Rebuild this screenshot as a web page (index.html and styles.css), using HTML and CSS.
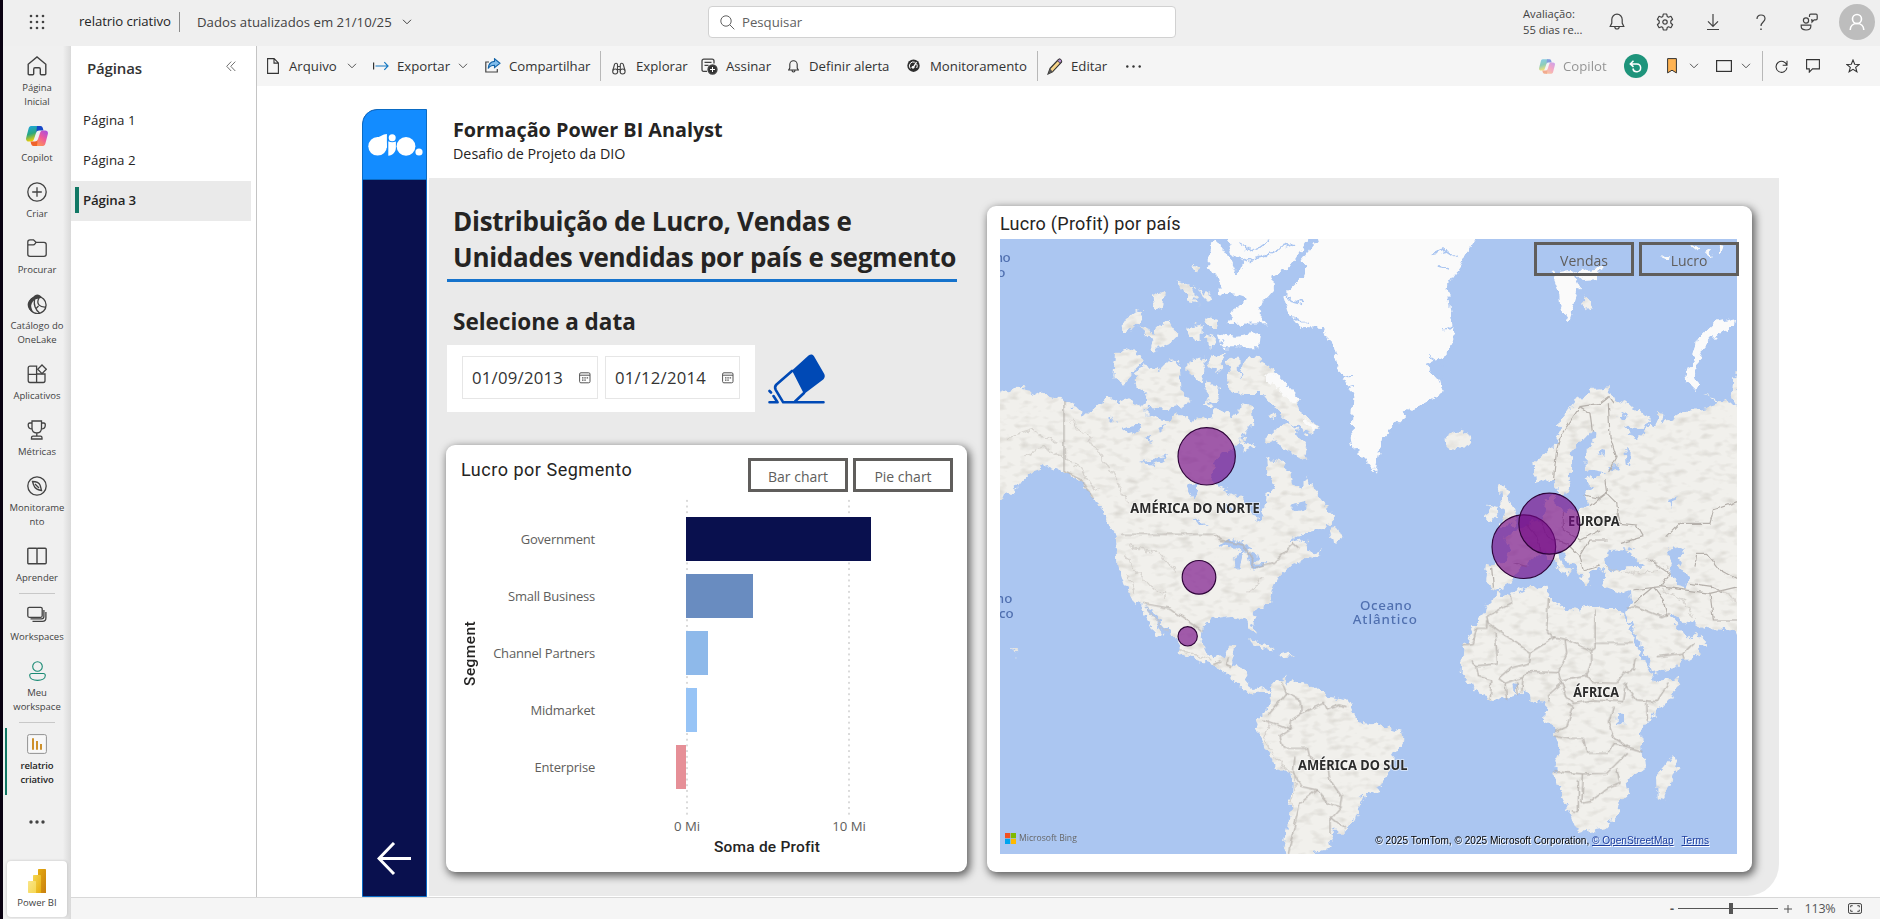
FILE: index.html
```html
<!DOCTYPE html>
<html lang="pt-BR">
<head>
<meta charset="utf-8">
<title>relatrio criativo - Power BI</title>
<link rel="stylesheet" href="styles.css">
</head>
<body>
<svg class="defs" width="0" height="0" aria-hidden="true">
  <defs>
    <linearGradient id="cpA" x1="0" y1="0" x2="0.3" y2="1"><stop offset="0" stop-color="#1aa5e8"/><stop offset=".55" stop-color="#2aa77f"/><stop offset="1" stop-color="#f5d000"/></linearGradient>
    <linearGradient id="cpB" x1="1" y1="0" x2="0.3" y2="1"><stop offset="0" stop-color="#a04de8"/><stop offset=".5" stop-color="#ef5a9a"/><stop offset="1" stop-color="#ff9a4d"/></linearGradient>
    <linearGradient id="pbA" x1="0" y1="0" x2="1" y2="1"><stop offset="0" stop-color="#e6ad10"/><stop offset="1" stop-color="#c87e0e"/></linearGradient>
    <linearGradient id="pbB" x1="0" y1="0" x2="1" y2="1"><stop offset="0" stop-color="#f6d751"/><stop offset="1" stop-color="#e6ad10"/></linearGradient>
    <linearGradient id="pbC" x1="0" y1="0" x2="1" y2="1"><stop offset="0" stop-color="#f9e589"/><stop offset="1" stop-color="#f6d751"/></linearGradient>
    <symbol id="copilot" viewBox="0 0 22 20">
      <path fill="url(#cpA)" d="M5 0h9.500c-1.500 0-2.500 1-3 2.600L8 13c-.5 1.700-1.500 2.500-3 2.500H2.700C.7 15.500-.4 14 .2 11.800L2.600 2.400C3 1 3.800 0 5 0z"/>
      <path fill="#1648c8" d="M11 0h3.500c1.300 0 1.900.8 2.300 2l.7 2.500h-4.300c-1.600 0-2.500.7-3 2.200z"/>
      <path fill="url(#cpB)" d="M17 20H7.500c1.500 0 2.500-1 3-2.600L14 7c.5-1.700 1.500-2.500 3-2.500h2.300c2 0 3.100 1.500 2.500 3.700l-2.400 9.400C19 19 18.200 20 17 20z"/>
      <path fill="#f0632a" d="M11 20H7.500c-1.300 0-1.900-.8-2.300-2l-.7-2.500h4.300c1.600 0 2.500-.7 3-2.200z"/>
    </symbol>
    <symbol id="chev" viewBox="0 0 10 6"><path d="M1 .8 5 4.800 9 .8" fill="none" stroke="currentColor"/></symbol>
    <symbol id="cal" viewBox="0 0 12 12"><g fill="none" stroke="#555"><rect x=".6" y=".8" width="10.400" height="10" rx="1.300"/><path d="M.6 3.200h10.400"/><path d="M3 5.800h6.200M3 8.200h4.200" stroke-width="1.300" stroke-dasharray="1.500 .8"/></g></symbol>
  </defs>
</svg>

<div class="app">
  <header class="topbar">
    <svg class="waffle" width="16" height="16" viewBox="0 0 16 16" fill="#424242"><circle cx="2" cy="2" r="1.300"/><circle cx="8" cy="2" r="1.300"/><circle cx="14" cy="2" r="1.300"/><circle cx="2" cy="8" r="1.300"/><circle cx="8" cy="8" r="1.300"/><circle cx="14" cy="8" r="1.300"/><circle cx="2" cy="14" r="1.300"/><circle cx="8" cy="14" r="1.300"/><circle cx="14" cy="14" r="1.300"/></svg>
    <div class="report-name">relatrio criativo</div>
    <div class="updated"><span>Dados atualizados em 21/10/25</span><svg width="10" height="6"><use href="#chev"/></svg></div>
    <div class="search">
      <svg width="15" height="15" viewBox="0 0 15 15" fill="none" stroke="#616161"><circle cx="6" cy="6" r="5.200"/><path d="m9.700 9.700 4.600 4.600"/></svg>
      <span>Pesquisar</span>
    </div>
    <div class="trial">Avaliação:<br>55 dias re...</div>
    <nav class="top-icons">
      <svg width="16" height="18" viewBox="0 0 16 18" fill="none" stroke="#424242" stroke-width="1.200"><path d="M1.200 13.500h13.600L13.200 10V6.400a5.200 5.200 0 0 0-10.400 0V10zM5.800 13.800a2.200 2.200 0 0 0 4.400 0"/></svg>
      <svg width="18" height="18" viewBox="0 0 18 18" fill="none" stroke="#424242" stroke-width="1.200" stroke-linejoin="round"><path d="M7.300 1h3.400l.5 2.400 1.300.8 2.400-.9 1.700 3-1.800 1.700v2l1.800 1.700-1.700 3-2.400-.9-1.300.8-.5 2.400H7.300l-.5-2.400-1.300-.8-2.400.9-1.700-3L3.200 10V8L1.400 6.300l1.700-3 2.400.9 1.300-.8z"/><circle cx="9" cy="9" r="2.200"/></svg>
      <svg width="14" height="18" viewBox="0 0 14 18" fill="none" stroke="#424242" stroke-width="1.200"><path d="M7 1v12M2 8.300l5 5 5-5M1 16.500h12"/></svg>
      <svg width="10" height="17" viewBox="0 0 10 17" fill="none" stroke="#424242" stroke-width="1.200"><path d="M1 5c0-2.500 1.700-4 4-4s4 1.400 4 3.800c0 3.200-4 3.400-4 7.200"/><path d="M5 14.500v1.600" stroke-width="1.500"/></svg>
      <svg width="18" height="18" viewBox="0 0 18 18" fill="none" stroke="#424242" stroke-width="1.200"><circle cx="6" cy="7.500" r="2.600"/><path d="M1.200 12.200h9.600v1.300c0 2.200-2 3.500-4.800 3.500s-4.800-1.300-4.800-3.500zM9.500 4V2.500c0-.8.500-1.300 1.300-1.300H16c.8 0 1.200.5 1.200 1.300v3c0 .8-.5 1.300-1.200 1.300h-1.800L12 9V6.800h-1"/></svg>
    </nav>
    <div class="avatar"><svg width="16" height="18" viewBox="0 0 16 18" fill="none" stroke="#fff" stroke-width="1.600"><circle cx="8" cy="6" r="4.500"/><path d="M1.200 17c0-4 2.800-6.500 6.800-6.500s6.800 2.500 6.800 6.500"/></svg></div>
  </header>

  <nav class="rail">
    <a class="nav"><svg viewBox="0 0 20 20" fill="none" stroke="#424242" stroke-width="1.400"><path d="M1.200 8.300 10 1l8.800 7.300v9.500c0 .7-.4 1-1 1h-3.500c-.6 0-1-.3-1-1v-4.600c0-1-.5-1.500-1.300-1.500H8c-.8 0-1.300.5-1.300 1.500v4.600c0 .7-.4 1-1 1H2.200c-.6 0-1-.3-1-1z"/></svg><span>Página<br>Inicial</span></a>
    <a class="nav"><svg class="wide"><use href="#copilot"/></svg><span>Copilot</span></a>
    <a class="nav"><svg viewBox="0 0 20 20" fill="none" stroke="#424242" stroke-width="1.300"><circle cx="10" cy="10" r="9.200"/><path d="M10 5.200v9.600M5.200 10h9.600"/></svg><span>Criar</span></a>
    <a class="nav"><svg viewBox="0 0 20 20" fill="none" stroke="#424242" stroke-width="1.300"><path d="M.8 4c0-1.400.9-2.200 2.200-2.200h3.500L9 4.300h8c1.400 0 2.200.9 2.200 2.200v9.700c0 1.300-.8 2.100-2.200 2.100H3c-1.300 0-2.200-.8-2.200-2.100zM.8 6.900h5.400c1.400 0 2-1.600 3-2.600"/></svg><span>Procurar</span></a>
    <a class="nav"><svg viewBox="0 0 20 20" fill="none" stroke="#424242" stroke-width="1.300"><circle cx="10.500" cy="11" r="8.600"/><path fill="#424242" stroke="none" d="M3 5.500C-.8 9 0 15.500 5.500 18c1-.5-1.700-4-1.300-6.500.4-3.200 2.300-5 4.600-6.300l6.200-1.400C12.500-.7 8 0 6.300 3 5 3.300 4 4.500 3 5.500z"/><path d="M7.500 5.500c-1 6 1.500 10.500 5 13.500M12 4c-3.500 6.500 1.500 9.500 7 9M8.500 15l3-3"/></svg><span>Catálogo do<br>OneLake</span></a>
    <a class="nav"><svg viewBox="0 0 20 20" fill="none" stroke="#424242" stroke-width="1.300"><path d="M9.600 10H18v6.500c0 1.300-.6 2-1.800 2H3c-1.200 0-1.800-.7-1.800-2V4c0-1.200.7-1.800 1.800-1.800h6.600v16.300M1.200 10.400h8.400"/><path d="m15 1 4.300 4.300L15 9.600l-4.300-4.300z"/></svg><span>Aplicativos</span></a>
    <a class="nav"><svg viewBox="0 0 20 20" fill="none" stroke="#424242" stroke-width="1.300"><path d="M5 1h9.500v7c0 3.200-2 5-4.700 5S5 11.200 5 8zM5 3H2.800C1.500 3 1.200 4 1.200 5c0 2.500 1.300 4 4 4M14.500 3h2.200c1.300 0 1.600 1 1.600 2 0 2.500-1.300 4-4 4M9.800 13v3M4.500 19v-1.200c0-1 .6-1.600 1.500-1.600h7.500c1 0 1.500.6 1.500 1.600V19z"/></svg><span>Métricas</span></a>
    <a class="nav"><svg viewBox="0 0 20 20" fill="none" stroke="#424242" stroke-width="1.300"><circle cx="10" cy="10" r="9.200"/><path d="M5.500 5.500c4 0 6.500 1 7.500 3.500s1 4 1.500 5.500c-3-.5-5-1-6.500-3s-2-4-2.500-6zM8 8l4 4"/></svg><span>Monitorame<br>nto</span></a>
    <a class="nav"><svg viewBox="0 0 20 20" fill="none" stroke="#424242" stroke-width="1.400"><path d="M.8 3.200c0-.7.3-1 1-1h7.500c.5 0 .7.500.7 1 0-.5.300-1 .8-1h7.400c.7 0 1 .3 1 1v13.600c0 .6-.3 1-1 1H1.800c-.7 0-1-.4-1-1zM10 2.500v15.200"/></svg><span>Aprender</span></a>
    <hr class="sep">
    <a class="nav"><svg viewBox="0 0 20 20" fill="none" stroke="#424242" stroke-width="1.300"><rect x=".8" y="2.300" width="14.400" height="10" rx="1.500"/><path d="M16.900 5v6.500c0 1.600-.9 2.400-2.400 2.400H3.500M18.900 7v6c0 2.300-1.400 3.400-3.500 3.400H5.500"/></svg><span>Workspaces</span></a>
    <a class="nav"><svg viewBox="0 0 20 20" fill="none" stroke="#1a8a74" stroke-width="1.100"><circle cx="10.500" cy="5.500" r="4.800"/><path d="M2.700 14.500c0-1.200.8-2 2-2h11.600c1.200 0 2 .8 2 2 0 3-3.300 4.900-7.800 4.900s-7.800-1.900-7.800-4.900z"/></svg><span>Meu<br>workspace</span></a>
    <hr class="sep">
    <a class="nav current"><svg viewBox="0 0 20 20"><rect x=".6" y=".6" width="18.800" height="18.800" rx="1.800" fill="#f8f8f8" stroke="#929292"/><path d="M6 4.200v11.600M10 7v8.800M14 10v5.800" stroke="#c98516" stroke-width="1.800"/></svg><span>relatrio<br>criativo</span></a>
    <svg class="more" width="16" height="4" viewBox="0 0 16 4" fill="#424242"><circle cx="2" cy="2" r="1.700"/><circle cx="8" cy="2" r="1.700"/><circle cx="14" cy="2" r="1.700"/></svg>
    <a class="product"><svg width="18" height="24" viewBox="0 0 18 24"><path fill="url(#pbA)" d="M10 1c0-.6.400-1 1-1h6c.6 0 1 .4 1 1v23h-8z"/><path fill="url(#pbB)" d="M5 7c0-.6.400-1 1-1h6c.6 0 1 .4 1 1v17H5z"/><path fill="url(#pbC)" d="M0 13c0-.6.400-1 1-1h6c.6 0 1 .4 1 1v11H1c-.6 0-1-.4-1-1z"/></svg><span>Power BI</span></a>
  </nav>

  <aside class="pages">
    <div class="pages-head"><h2>Páginas</h2><svg width="10" height="11" viewBox="0 0 10 11" fill="none" stroke="#707070"><path d="M5.200.6.700 5.300l4.500 4.700M9.300.6 4.800 5.300 9.300 10"/></svg></div>
    <div class="page-item">Página 1</div>
    <div class="page-item">Página 2</div>
    <div class="page-item on">Página 3</div>
  </aside>

  <div class="toolbar">
    <div class="tool"><svg width="12" height="16" viewBox="0 0 12 16" fill="none" stroke="#333" stroke-width="1.100"><path d="M.6.6h6.500l4.300 4.300v10.500H.6zM7 .6v4.500h4.400"/></svg><span>Arquivo</span><svg class="chev" width="10" height="6"><use href="#chev"/></svg></div>
    <div class="tool t8"><svg width="16" height="10" viewBox="0 0 16 10" fill="none"><path d="M.6 1.500v7" stroke="#333" stroke-width="1.200"/><path d="M2.500 5H15M11.300 1.200 15 5l-3.700 3.800" stroke="#1678c2" stroke-width="1.200"/></svg><span>Exportar</span><svg class="chev" width="10" height="6"><use href="#chev"/></svg></div>
    <div class="tool t8"><svg class="up" width="16" height="15" viewBox="0 0 16 15" fill="none"><path d="M4 4H.8v10h11.500v-3" stroke="#444" stroke-width="1.200"/><path d="M9.500.8 15 5.300 9.500 9.700V7.200c-3 0-5 .8-6.300 3.300.2-4.200 2-6.700 6.300-7.100z" fill="#83beec" stroke="#1464a8" stroke-width="1.100"/></svg><span>Compartilhar</span></div>
    <i class="bar"></i>
    <div class="tool t10"><svg class="dn" width="14" height="13" viewBox="0 0 14 13" fill="none" stroke="#444" stroke-width="1.100"><circle cx="3.200" cy="9.500" r="2.500"/><circle cx="10.600" cy="9.500" r="2.500"/><path d="M.8 8.500 2.500 2.500C2.800 1 5.300.6 5.500 2.500v7M13 8.500l-1.700-6C11 1 8.500.6 8.300 2.500v7M5.600 4.500h2.600M5.600 7.500h2.600"/></svg><span>Explorar</span></div>
    <div class="tool t8"><svg width="17" height="17" viewBox="0 0 17 17" fill="none" stroke="#424242" stroke-width="1.300"><path d="M6 13.300H2.500C1.500 13.300 1 12.500 1 11.500V3c0-1.200.7-1.900 1.900-1.900h8.200c1.200 0 1.900.7 1.900 1.900v2.500M3.500 4.400h7M3.500 7.300h4"/><circle cx="11.500" cy="11.500" r="4.500" fill="#333"/><path d="M11.500 9v5M9 11.500h5" stroke="#fff" stroke-width="1"/></svg><span>Assinar</span></div>
    <div class="tool t10"><svg width="11" height="13" viewBox="0 0 11 13" fill="none" stroke="#333" stroke-width="1.100"><path d="M.6 10h9.800L9.200 8V4.500a3.700 3.700 0 0 0-7.400 0V8zM4 10.300c0 2.300 3 2.300 3 0"/></svg><span>Definir alerta</span></div>
    <div class="tool t10"><svg width="13" height="14" viewBox="0 0 13 14" fill="none"><circle cx="6.500" cy="6.700" r="6.200" fill="#2e2e2e"/><path d="M3.300 9.500a4 4 0 0 1 4.500-6.300M9.700 5a4 4 0 0 1 0 4" stroke="#fff"/><path d="m9.500 3.200-3 5" stroke="#fff" stroke-width="1.300"/><circle cx="6" cy="8.300" r="1.400" fill="#fff"/></svg><span>Monitoramento</span></div>
    <i class="bar"></i>
    <div class="tool t8"><svg width="16" height="17" viewBox="0 0 16 17"><path d="m3 10.500 8.500-9c1.200-1 3.700 1 3 2.600l-9 9.800L1 16z" fill="#f7d48a" stroke="#333" stroke-width="1.100"/><path d="m10.500 2.700 1.600-1.500c1.300-.6 3 .9 2.300 2.500L13 5.300z" fill="#b58ad0" stroke="#333" stroke-width=".8"/><path d="m3 10.500-2 5.700 4.700-2.400z" fill="#555"/></svg><span>Editar</span></div>
    <div class="tool"><svg width="15" height="3" viewBox="0 0 15 3" fill="#333"><circle cx="1.300" cy="1.500" r="1.200"/><circle cx="7.500" cy="1.500" r="1.200"/><circle cx="13.700" cy="1.500" r="1.200"/></svg></div>
    <div class="tool t8 disabled"><svg width="16" height="15"><use href="#copilot"/></svg><span>Copilot</span></div>
    <div class="tool"><b class="reset"><svg width="14" height="13" viewBox="0 0 14 13" fill="none" stroke="#fff" stroke-width="1.500"><path d="M4.500.8 1.300 3.900l3.200 3M1.800 3.900h6a3.900 3.900 0 1 1-3.900 4.600"/></svg></b></div>
    <div class="tool"><svg width="10" height="16" viewBox="0 0 10 16"><path d="M.6.6h8.800v14.300L5 12.200.6 14.900z" fill="#ffb352" stroke="#333"/></svg><svg class="chev mark" width="10" height="6"><use href="#chev"/></svg></div>
    <div class="tool"><svg width="16" height="12" viewBox="0 0 16 12"><rect x=".6" y=".6" width="14.800" height="10.800" fill="none" stroke="#333" stroke-width="1.200"/></svg><svg class="chev near" width="10" height="6"><use href="#chev"/></svg></div>
    <i class="bar"></i>
    <div class="tool"><svg width="13" height="13" viewBox="0 0 13 13" fill="none" stroke="#333" stroke-width="1.100"><path d="M11.800 5.200A5.500 5.500 0 1 0 12 7.500M12 .8v4.500H7.700"/></svg></div>
    <div class="tool"><svg width="14" height="14" viewBox="0 0 14 14" fill="none" stroke="#333" stroke-width="1.100"><path d="M.6.6h12.800v9.300H6.500l-3.200 3.200V9.900H.6z"/></svg></div>
    <div class="tool"><svg width="14" height="14" viewBox="0 0 14 14" fill="none" stroke="#333" stroke-width="1.100"><path d="m7 1 1.700 4.200 4.500.3-3.500 2.900 1.200 4.400L7 10.400l-3.900 2.400 1.200-4.400L.8 5.500l4.500-.3z"/></svg></div>
  </div>

  <main class="canvas">
    <div class="strip">
      <div class="logo"><svg width="55" height="22" viewBox="0 0 55 22" fill="#fff"><circle cx="9.600" cy="12.300" r="9.300"/><path d="M9 12V3.100C13.500 3.200 14 .3 18.900.1V14z"/><circle cx="24.200" cy="3.700" r="3.500"/><path d="M20.300 7.200c2.200 1.200 5.400 1.200 7.600.2v6.100c0 4.700-3.300 8-7.600 8.200z"/><circle cx="38" cy="12.300" r="9.400"/><circle cx="51" cy="18" r="3.600"/></svg></div>
      <svg class="back" width="34" height="34" viewBox="0 0 34 34" fill="none" stroke="#fff" stroke-width="3"><path d="M17 1 2 16.500 17 32M2 16.500h32"/></svg>
    </div>
    <div class="report">
      <div class="report-head"><h1>Formação Power BI Analyst</h1><p>Desafio de Projeto da DIO</p></div>
      <div class="board">
        <section class="left">
          <h2 class="headline">Distribuição de Lucro, Vendas e<br>Unidades vendidas por país e segmento</h2>
          <h3 class="pick">Selecione a data</h3>
          <div class="filters">
            <div class="dates">
              <div class="date"><span>01/09/2013</span><svg width="12" height="12"><use href="#cal"/></svg></div>
              <div class="date"><span>01/12/2014</span><svg width="12" height="12"><use href="#cal"/></svg></div>
            </div>
            <svg width="57" height="50" viewBox="0 0 57 50"><g fill="none" stroke="#0049b5" stroke-width="2.600" stroke-linecap="round" stroke-linejoin="round"><path d="M24 17 8.500 30.500c-1.700 1.800-1.800 3.500-.8 5.300l7.500 12.500H55.500M27 47.500l9-8.500"/><path d="M1.500 37 3 38.500M5.500 42l4 6.300H1.500"/></g><path fill="#0049b5" d="M24 16.500 40.500 1.500c2-1.500 4.200-1.500 5.500.7l10 17.300c1.200 2 1 4.200-.8 6L36 40z"/></svg>
          </div>
          <div class="card chart">
            <div class="card-head"><h4>Lucro por Segmento</h4><div class="btns"><button>Bar chart</button><button>Pie chart</button></div></div>
            <div class="plot">
              <div class="ytitle"><span>Segment</span></div>
              <div class="cats"><span>Government</span><span>Small Business</span><span>Channel Partners</span><span>Midmarket</span><span>Enterprise</span></div>
              <div class="bars">
                <i style="width:184.500px;background:#09104e"></i>
                <i style="width:67px;background:#698cc0"></i>
                <i style="width:21.500px;background:#8eb9ea"></i>
                <i style="width:10.500px;background:#97c4f6"></i>
                <i class="neg" style="width:10px;background:#e68f97"></i>
              </div>
            </div>
            <div class="ticks"><span>0 Mi</span><span>10 Mi</span></div>
            <div class="xtitle">Soma de Profit</div>
          </div>
        </section>

        <section class="card mapcard">
          <h4>Lucro (Profit) por país</h4>
          <div class="map">
            <svg class="world" viewBox="60 147 2211 1845" preserveAspectRatio="none">
              <defs>
                <filter id="coast" x="0" y="0" width="2300" height="2000" filterUnits="userSpaceOnUse" color-interpolation-filters="sRGB">
                  <feTurbulence type="fractalNoise" baseFrequency=".04" numOctaves="3" seed="4" result="n"/>
                  <feDisplacementMap in="SourceGraphic" in2="n" scale="34" xChannelSelector="R" yChannelSelector="G" result="land"/>
                  <feTurbulence type="fractalNoise" baseFrequency=".025 .05" numOctaves="2" seed="9"/>
                  <feColorMatrix values="0 0 0 0 .5  0 0 0 0 .47  0 0 0 0 .42  .5 0 0 0 -.25" result="shade"/>
                  <feComposite in="shade" in2="land" operator="in" result="relief"/>
                  <feMerge><feMergeNode in="land"/><feMergeNode in="relief"/></feMerge>
                </filter>
                <filter id="rough" x="0" y="0" width="2300" height="2000" filterUnits="userSpaceOnUse" color-interpolation-filters="sRGB">
                  <feTurbulence type="fractalNoise" baseFrequency=".04" numOctaves="3" seed="4" result="n"/>
                  <feDisplacementMap in="SourceGraphic" in2="n" scale="30" xChannelSelector="R" yChannelSelector="G"/>
                </filter>
                <filter id="border" x="0" y="0" width="2300" height="2000" filterUnits="userSpaceOnUse" color-interpolation-filters="sRGB">
                  <feTurbulence type="fractalNoise" baseFrequency=".04" numOctaves="2" seed="4" result="n"/>
                  <feDisplacementMap in="SourceGraphic" in2="n" scale="14" xChannelSelector="R" yChannelSelector="G"/>
                </filter>
              </defs>
              <rect x="60" y="147" width="2215" height="1850" fill="#abc6f1"/>
              <g filter="url(#coast)" fill="#f1f0ec">
                <path d="M40 615 100 595 130 598 190 612 250 630 290 655 312 680 350 645 385 622 420 640 450 628 500 655 500 678 560 690 600 675 640 690 690 680 715 655 745 665 760 690 790 640 815 655 820 700 790 735 765 770 710 800 695 845 700 885 760 915 800 935 835 995 850 970 860 920 885 890 865 850 862 805 895 810 930 840 935 880 960 885 985 860 1010 910 1040 950 1068 980 1050 1010 990 1025 950 1040 925 1060 960 1048 985 1060 975 1085 1000 1090 1025 1072 1020 1095 985 1108 960 1115 930 1125 920 1145 890 1165 875 1200 870 1235 825 1270 815 1290 835 1325 830 1337 815 1315 800 1285 760 1280 720 1285 690 1290 668 1310 665 1350 680 1385 705 1405 735 1395 745 1370 770 1370 762 1400 755 1425 800 1435 802 1455 798 1480 825 1500 860 1490 870 1512 845 1512 820 1518 790 1495 765 1468 730 1447 700 1428 650 1410 600 1390 598 1365 575 1335 540 1295 515 1255 494 1248 525 1285 553 1340 545 1347 520 1320 505 1290 485 1250 460 1225 430 1180 415 1130 413 1070 410 1035 385 1000 370 960 355 940 330 915 300 870 250 845 205 825 160 840 130 870 100 905 40 930z"/>
                <path d="M865 1515 880 1480 920 1460 915 1480 945 1475 1000 1485 1040 1520 1100 1530 1120 1570 1150 1600 1200 1605 1265 1625 1270 1650 1240 1700 1220 1760 1205 1795 1150 1820 1135 1850 1125 1890 1095 1925 1060 1925 1050 1932 1058 1965 1030 1980 1005 1985 1000 2020 905 2020 920 1920 930 1850 935 1780 930 1750 890 1730 860 1680 830 1620 840 1580 862 1560 870 1530z"/>
                <path d="M405 488 440 475 498 510 455 550 432 590 400 562zM470 545 500 525 540 540 575 505 600 540 605 600 632 630 600 650 560 660 485 652 505 612 460 580zM475 410 520 425 560 390 595 435 570 460 510 482 520 450zM425 415 460 360 495 370 480 402 440 425zM592 272 635 285 655 340 622 332zM518 322 552 303 545 362 522 355zM660 298 694 322 682 342zM610 410 665 398 665 460 630 442zM622 512 675 500 665 578 622 542zM688 495 738 490 720 542 690 538zM684 565 722 610 702 636 675 612zM675 382 715 390 708 412 680 406zM678 430 708 438 706 472 680 468zM640 228 658 230 654 250zM742 530 760 500 778 500 780 550 785 575 790 520 805 500 835 505 870 530 905 580 955 622 962 668 1018 712 995 732 940 708 895 665 850 612 790 612 748 602zM780 740 828 770 785 782zM860 748 905 705 930 700 982 775 972 810 910 772zM865 670 885 672 880 690zM665 640 690 625 700 650zM590 515 602 505 600 525zM1045 1035 1065 1008 1090 1040 1070 1055zM800 1350 850 1358 885 1380 875 1386 820 1362zM895 1395 925 1385 945 1398 905 1402zM1395 745 1420 728 1445 722 1477 738 1465 762 1420 782 1400 768zM1515 985 1530 945 1550 950 1552 975 1530 1000zM1555 880 1580 880 1588 930 1615 985 1595 1008 1560 1012 1575 980 1562 940zM1810 310 1838 350 1815 358zM95 1370 112 1385 108 1395zM2080 1695 2092 1730 2055 1828 2030 1820 2028 1760 2055 1730z"/>
                <path transform="translate(1140)" d="M525 880 520 820 590 760 600 690 650 630 700 600 750 595 760 620 810 640 865 690 852 715 795 705 830 748 865 712 890 708 888 660 910 672 905 700 960 665 1040 655 1075 640 1030 610 1060 625 1160 665 1160 1350 1110 1320 1050 1318 1000 1300 960 1290 932 1268 925 1280 950 1305 985 1345 1005 1325 1040 1360 1000 1405 940 1435 885 1450 870 1415 840 1365 815 1310 795 1270 805 1255 812 1225 810 1200 780 1210 740 1195 722 1170 740 1150 720 1130 690 1140 688 1175 675 1190 655 1150 640 1125 610 1090 585 1080 600 1110 633 1145 625 1165 580 1110 545 1090 500 1120 468 1150 450 1180 420 1200 400 1195 378 1180 385 1120 440 1115 455 1080 430 1040 470 1020 510 1000 550 980 555 930 580 915 600 955 650 965 690 945 670 910 700 890 670 868 740 850 680 840 680 780 710 735 695 722 660 760 635 800 632 870 620 915 595 915 580 860 560 870z"/>
                <path transform="translate(1140 990)" d="M410 215 450 225 490 205 560 200 570 245 620 265 660 280 680 255 740 270 780 270 800 300 830 380 860 430 885 483 957 475 940 530 870 600 845 630 855 740 800 780 805 820 775 850 770 890 740 925 655 940 635 890 605 830 580 750 600 700 590 640 555 600 560 550 520 540 490 515 395 545 340 510 305 460 310 380 350 310 380 260z"/>
                <path d="M2275 540 2260 560 2255 620 2275 660z"/>
              </g>
              <g filter="url(#rough)" fill="#fafafa">
                <path d="M1030 120 1000 165 960 215 985 228 972 255 910 320 925 370 960 410 1030 415 1055 460 1075 530 1095 570 1120 620 1115 720 1125 780 1160 815 1185 845 1195 800 1210 740 1245 700 1290 660 1388 610 1375 565 1340 525 1405 490 1420 430 1405 350 1400 290 1440 230 1460 190 1505 120z"/>
                <path d="M735 125 1000 125 930 230 880 260 882 300 850 335 838 375 860 400 740 402 770 355 800 325 770 315 720 310 715 260 680 235 690 170 710 150 745 200 770 255 790 215 755 190z"/>
                <path d="M715 430 770 440 840 428 835 472 730 472zM1715 250 1775 240 1800 290 1767 395 1740 350 1738 310zM1780 245 1865 230 1850 268 1805 270zM2040 200 2070 195 2065 210zM2180 190 2195 180 2198 200zM2130 165 2165 172 2155 185zM2210 160 2230 165 2225 188z"/>
                <path d="M2265 385 2200 400 2150 450 2140 500 2112 565 2145 600 2160 590 2140 545 2170 480 2215 430 2262 408z"/>
                <path d="M880 545 920 585 960 630 940 645 900 600 850 565zM965 690 1012 708 995 725z"/>
              </g>
              <g filter="url(#rough)" fill="none" stroke="#abc6f1" stroke-width="5">
                <path d="M745 195 800 212 850 200 905 175 950 160M780 165 820 185 870 150M905 300 930 330 970 340M900 370 940 380 985 400M1080 570 1115 560M1090 600 1125 590M1345 540 1385 560M1350 500 1400 530M1390 420 1420 400M1370 230 1410 240M1355 190 1400 180 1430 200"/>
              </g>
              <g filter="url(#rough)" fill="#abc6f1">
                <path d="M718 1065 760 1045 812 1075 800 1088 765 1070zM763 1105 795 1082 778 1140 766 1132zM800 1088 838 1098 822 1122 872 1115 812 1142z"/>
                <path d="M1875 1115 1890 1080 1930 1078 1960 1100 1995 1130 1940 1132 1895 1145zM1940 1073 1965 1068 1950 1085zM2060 1080 2110 1070 2115 1092 2090 1108 2125 1170 2120 1198 2088 1190 2070 1155 2075 1125z"/>
                <path d="M425 715 485 700 490 718 455 735zM480 815 570 795 520 825zM500 740 520 735 510 765zM620 890 660 880 640 930zM390 685 400 683 408 700zM535 710 560 705 540 722zM640 980 655 985 680 1010 665 1010zM735 950 760 955 745 965zM930 950 980 940 985 950 940 965zM1915 1570 1935 1572 1935 1600 1912 1600zM1590 1490 1610 1478 1612 1510zM1935 770 1955 790 1950 830 1940 820zM1880 830 1910 820 1915 840zM1850 790 1870 780 1875 800zM2065 930 2090 925 2075 950zM1915 680 1935 670 1940 685z"/>
              </g>
              <g filter="url(#border)" fill="none" stroke="#b5b0ab" stroke-width="3.600">
                <path d="M252 630V842L300 865 340 925M425 1033H705L720 1050 790 1065 818 1110 815 1135 880 1118 940 1060 958 1075M487 1240 570 1255 605 1280 650 1310 668 1325M745 1400 740 1425 755 1430M700 1425 725 1415"/>
                <path d="M905 1475 920 1510 865 1575M920 1510 960 1530 965 1570 1030 1540 1040 1560 1080 1545 1100 1550M965 1570 935 1590 930 1620 900 1640 910 1675 980 1675 985 1695 1045 1740 1050 1770 1085 1820 1080 1850 1045 1840 1010 1800 965 1790 940 1750 945 1700M850 1590 880 1600 930 1620M1050 1880 1095 1915M1010 1800 960 1840 940 1920 925 1990M1085 1850 1050 1890 1050 1930"/>
                <path transform="translate(1140 990)" d="M450 225 455 250 380 290 385 310 510 398 585 352 615 358 695 392 705 385V272M565 235 560 330 585 352M705 370H820M405 338 413 432 350 437 335 425M310 375 340 370 350 325 380 325 380 300M510 398 505 430 450 445 415 475 435 490 490 470 505 455 595 458 620 400 615 358M695 392 695 430 680 465 700 488 770 490 790 460 820 450 825 415M595 458 605 490 565 525 570 545M605 480 680 465M605 490 620 530 640 550 700 540 790 545 800 490M620 550 640 560 620 620 585 635M585 645 630 655 670 655 680 700 740 700 760 670 800 680 850 695M580 755 670 762 740 760 760 740 800 700M670 762 665 850 690 845 740 808 780 790 770 745M635 873 655 875 655 780M760 560 745 610 760 650 800 680M860 545 862 600M790 490 830 540 890 545 925 490M350 440 355 470 395 480 390 540M435 490 440 540M470 485 475 525M490 470 485 515M800 265 830 260 905 290 930 280M890 410 970 400 1000 370M970 400 975 420"/>
                <path transform="translate(1140)" d="M580 870 590 780 600 740 660 650 690 670 697 725M660 650 720 640 745 620 760 640M745 640 750 740 768 800 745 845M735 870 740 910 770 940 780 1000 830 1005 850 1040 780 1060M670 915 720 925 740 910M690 950 720 925M1135 935 1060 960 1050 1000 960 1000 920 1040M610 960 610 1020 660 1050 720 1020M540 990 560 1040 620 1060 660 1100 690 1050 740 1050M500 1000 530 1040 545 1090M395 1130 400 1190M460 1118 500 1130M660 1100 670 1140 720 1125M870 1110 930 1150 900 1190 820 1200M820 1240 880 1190 910 1230 920 1280M900 1190 1050 1210 1060 1290 1135 1290M1050 1210 1135 1190M1005 1130 1010 1090 1040 1090 1080 1140 1135 1170M990 1180 1060 1190 1090 1210"/>
              </g>
              <g filter="url(#rough)" fill="none" stroke="#c9c5c0" stroke-width="4" opacity=".6">
                <path d="M80 740 150 720 230 760M130 800 190 770 240 800 300 830 350 900M270 690 330 750 400 850 440 940M430 1090 500 1180 560 1220M440 1150 470 1215M450 1070 540 1090 590 1150M500 1250 560 1330M870 1590 850 1640 890 1710 945 1760 935 1850M600 1380 700 1410M800 1210 850 1160M2045 1200 2110 1230 2140 1290M2200 1190 2270 1230M1870 1130 1960 1150 2040 1140M2000 1105 2070 1140"/>
              </g>
              <g class="ocean"><text x="44" y="217" textLength="48">no</text><text x="52" y="261">o</text><text x="47" y="1240" textLength="50">no</text><text x="57" y="1283" textLength="44">co</text><text x="1140" y="1259" textLength="155">Oceano</text><text x="1118" y="1303" textLength="193">Atlântico</text></g>
              <g class="land">
                <text x="451" y="968" textLength="388" lengthAdjust="spacingAndGlyphs">AMÉRICA DO NORTE</text>
                <text x="1764" y="1008" textLength="155" lengthAdjust="spacingAndGlyphs">EUROPA</text>
                <text x="1780" y="1522" textLength="137" lengthAdjust="spacingAndGlyphs">ÁFRICA</text>
                <text x="954" y="1739" textLength="328" lengthAdjust="spacingAndGlyphs">AMÉRICA DO SUL</text>
              </g>
              <g fill="#750985" fill-opacity=".65" stroke="#2d0338" stroke-width="3.500"><circle cx="1631.500" cy="1070" r="95.500"/><circle cx="1708" cy="1001" r="91.500"/><circle cx="680" cy="799" r="86"/><circle cx="657" cy="1162" r="50.500"/><circle cx="623" cy="1339" r="29"/></g>
            </svg>
            <div class="btns over"><button>Vendas</button><button>Lucro</button></div>
            <div class="bing"><svg width="11" height="11" viewBox="0 0 11 11"><path fill="#f25022" d="M0 0h5.200v5.200H0z"/><path fill="#7fba00" d="M5.800 0H11v5.200H5.800z"/><path fill="#00a4ef" d="M0 5.800h5.200V11H0z"/><path fill="#ffb900" d="M5.800 5.800H11V11H5.800z"/></svg><span>Microsoft Bing</span></div>
            <div class="credits">© 2025 TomTom, © 2025 Microsoft Corporation, <a>© OpenStreetMap</a><a>Terms</a></div>
          </div>
        </section>
      </div>
    </div>
  </main>

  <footer class="status">
    <span class="minus">-</span>
    <div class="track"><i></i></div>
    <svg width="8" height="8" viewBox="0 0 8 8" stroke="#555"><path d="M4 0v8M0 4h8"/></svg>
    <span class="pct">113%</span>
    <svg width="14" height="11" viewBox="0 0 14 11" fill="none" stroke="#444"><rect x=".5" y=".6" width="13" height="9.800" rx="1.500"/><path d="M2.700 4.300V2.700h2M9.300 2.700h2v1.600M11.300 6.700v1.600h-2M4.700 8.300h-2V6.700"/></svg>
  </footer>
</div>
</body>
</html>
```

FILE: styles.css
```css
* { box-sizing: border-box; }
body {
  margin: 0;
  font-family: "Open Sans", "Noto Sans", sans-serif;
  color: #333;
  background: #fff;
  overflow: hidden;
}
h1, h2, h3, h4, p { margin: 0; }
svg { display: block; flex: none; }
svg.defs { position: absolute; }

.app {
  width: 1880px;
  height: 919px;
  border-left: 3px solid #0a0212;
  display: grid;
  grid-template-columns: 68px 186px 1fr;
  grid-template-rows: 46px 40px 1fr 22px;
}

/* Top bar */
.topbar {
  grid-column: 1 / -1;
  background: #efefef;
  display: flex;
  align-items: center;
  padding: 0 5px 2px 26px;
  font-size: 13.200px;
  white-space: nowrap;
}
.topbar > * { flex: none; }
.report-name { width: 101px; margin-left: 34px; height: 20px; line-height: 18px; border-right: 1px solid #8a8a8a; color: #242424; letter-spacing: -.08px; }
.updated { display: flex; align-items: center; width: 513px; padding-left: 17px; color: #424242; letter-spacing: .03px; }
.updated svg { margin-left: 10px; }
.search { width: 468px; height: 32px; margin-left: 15px; border: 1px solid #d1d1d1; border-radius: 4px; background: #fff; display: flex; align-items: center; gap: 7px; padding-left: 11px; color: #616161; }
.trial { margin-left: 347px; width: 70px; font-size: 11.200px; line-height: 16px; color: #424242; }
.top-icons { display: grid; grid-template-columns: repeat(5, 48px); justify-items: center; align-items: center; }
.avatar { width: 36px; height: 36px; border-radius: 50%; background: #bdbdbd; display: grid; place-items: center; margin-left: 6px; }

/* Navigation rail */
.rail {
  grid-row: 2 / -1;
  background: linear-gradient(90deg, #f0f0f0 88%, #d9d9d9);
  display: flex;
  flex-direction: column;
  align-items: center;
  gap: 17px;
  padding: 10px 0 2px;
  font-size: 9.500px;
  line-height: 14px;
  text-align: center;
  color: #424242;
}
.nav { display: flex; flex-direction: column; align-items: center; gap: 5px; width: 68px; }
.nav svg { width: 20px; height: 20px; }
.nav svg.wide { width: 22px; }
.sep { width: 36px; height: 1px; border: 0; background: #c8c8c8; margin: -9px 0 -6px; }
.current { color: #242424; font-weight: 600; letter-spacing: -.15px; background: linear-gradient(#117865, #117865) 2px 0 / 2px 100% no-repeat; margin: -6px 0 -8px; padding: 6px 0 8px; }
.more { margin-top: 16px; }
.product { margin-top: auto; width: 60px; height: 56px; background: #fff; border-radius: 4px; box-shadow: 0 0 3px #0003; display: flex; flex-direction: column; align-items: center; gap: 3px; padding-top: 8px; }

/* Pages pane */
.pages { grid-row: 2 / 4; grid-column: 2; border-right: 1px solid #c4c4c4; background: #fff; }
.pages-head { display: flex; justify-content: space-between; padding: 12px 20px 0 16px; height: 55px; }
.pages-head h2 { font-size: 15px; line-height: 21px; font-weight: 600; color: #333; letter-spacing: -.15px; }
.pages-head svg { margin-top: 3px; }
.page-item { width: 180px; height: 40px; padding-left: 12px; line-height: 38px; font-size: 13.300px; color: #252423; }
.page-item.on { font-weight: 600; letter-spacing: -.15px; background: linear-gradient(#117865, #117865) 4px 6px / 4px 26px no-repeat #eaeaea; }

/* Toolbar */
.toolbar {
  grid-row: 2;
  grid-column: 3;
  background: #f5f5f5;
  padding-left: 10px;
  display: grid;
  grid-template-columns: 106px 112px 115px 12px 89px 87px 119px 130px 10px 79px 413px 85px 43px 49px 46px 13px 31px 40px 1fr;
  align-items: center;
  font-size: 13.200px;
  white-space: nowrap;
  color: #333;
}
.tool { display: flex; align-items: center; gap: 10px; }
.tool.t8 { gap: 8px; }
.chev { color: #555; }
.tool .chev.mark { margin-left: 2px; }
.tool .chev.near { margin-left: -1px; }
.up { margin-top: -2px; }
.dn { margin-top: 4px; }
.bar { width: 1px; height: 30px; background: #b8b8b8; }
.disabled { opacity: .5; }
.reset { width: 24px; height: 24px; border-radius: 50%; background: #1e947b; display: grid; place-items: center; }

/* Report page */
.canvas { grid-row: 3; grid-column: 3; padding: 23px 0 0 105px; display: flex; background: #fff; }
.strip { width: 65px; height: 788px; border: 1px solid #0a6bc4; border-radius: 15px 0 0 0; background: #09104e; overflow: hidden; display: flex; flex-direction: column; justify-content: space-between; }
.logo { height: 70px; background: #138cff; border-bottom: 1px solid #0a6bc4; padding: 24px 0 0 5px; }
.back { margin: 0 0 20px 14px; }
.report { margin-left: 2px; width: 1350px; display: flex; flex-direction: column; }
.report-head { height: 69px; padding: 6px 0 0 24px; color: #252423; }
.report-head h1 { font-size: 19.800px; line-height: 29px; font-weight: 700; white-space: nowrap; }
.report-head p { font-size: 14.300px; line-height: 20px; }
.board { height: 718px; background: #eaeaea; border-radius: 0 0 32px 0; display: flex; padding-top: 24px; }

.left { width: 558px; padding-left: 18px; color: #252423; }
.headline { width: 510px; height: 80px; padding: 1px 0 0 6px; font-size: 26px; line-height: 36px; letter-spacing: -.27px; font-weight: 700; white-space: nowrap; border-bottom: 3px solid #1673cc; }
.pick { padding: 24px 0 0 6px; font-size: 22.500px; line-height: 32px; font-weight: 700; height: 63px; }
.filters { display: flex; align-items: center; gap: 13px; }
.dates { width: 308px; height: 67px; background: #fff; display: flex; gap: 7px; padding: 11px 0 0 15px; }
.date { width: 136px; height: 43px; border: 1px solid #e6e6e6; display: flex; align-items: center; justify-content: space-between; padding: 0 6px 0 9px; font-size: 16.700px; letter-spacing: .25px; color: #333; }
.date + .date { width: 135px; padding-right: 5px; }
.card { background: #fff; border-radius: 9px; box-shadow: 2px 3px 8px 1px #0009; }
.card h4 { font-family: Roboto, sans-serif; font-weight: 400; font-size: 18px; line-height: 24px; color: #252423; white-space: nowrap; letter-spacing: .26px; }
.chart { width: 521px; height: 427px; margin: 33px 0 0 -1px; padding: 13px 14px 0 15px; }
.card.chart h4 { letter-spacing: .52px; }
.card-head { display: flex; justify-content: space-between; height: 40px; }
.btns { display: flex; gap: 5px; }
button { width: 100px; height: 34px; border: 3px solid #605e5c; background: none; padding: 3px 0 0; font: 14px/1 "Open Sans", sans-serif; color: #605e5c; }
.plot { display: flex; height: 317px; }
.ytitle { width: 20px; display: flex; align-items: center; justify-content: center; font: 500 15.500px Roboto, sans-serif; color: #252423; }
.ytitle span { writing-mode: vertical-rl; transform: rotate(180deg); letter-spacing: .4px; margin: 0 2px 6px 0; }
.cats { width: 114px; padding-top: 13px; text-align: right; font-size: 13px; letter-spacing: -.2px; color: #605e5c; white-space: nowrap; }
.cats span { display: block; height: 57.100px; line-height: 57px; }
.bars { flex: 1; margin-left: 91px; padding-top: 19px; background: radial-gradient(circle, #cfcfcf .6px, transparent 1px) 0 0 / 2px 5.700px repeat-y, radial-gradient(circle, #cfcfcf .6px, transparent 1px) 162px 0 / 2px 5.700px repeat-y; }
.bars i { display: block; height: 44px; margin-bottom: 13.100px; }
.bars .neg { margin-left: -10px; }
.ticks { display: flex; padding-left: 194px; font-size: 13.200px; line-height: 22px; color: #605e5c; }
.ticks span { width: 64px; text-align: center; }
.ticks span + span { margin-left: 98px; }
.xtitle { padding: 1px 0 0 253px; font: 500 15.500px/18px Roboto, sans-serif; color: #252423; letter-spacing: .2px; }

.mapcard { width: 765px; height: 666px; margin-top: 4px; padding: 6px 0 0 13px; }
.map { width: 737px; height: 615px; margin-top: 3px; position: relative; }
.world { width: 737px; height: 615px; }
.ocean text { font: 500 40px "Noto Sans", sans-serif; fill: #5070b0; }
.land text { font: 700 40px "Noto Sans", sans-serif; fill: #2b2b2b; stroke: #fff9; stroke-width: 5px; paint-order: stroke; }
.over { position: absolute; left: 534px; top: 3px; }
.bing { position: absolute; left: 5px; bottom: 10px; display: flex; gap: 3px; align-items: center; font-size: 8.600px; color: #666; }
.credits { position: absolute; right: 28px; bottom: 6px; font: 10.100px/14px "Liberation Sans", sans-serif; color: #000; white-space: nowrap; text-shadow: 1px 1px #fff; }
.credits a { color: #1c3c9c; text-decoration: underline; }
.credits a + a { margin-left: 8px; }

/* Status bar */
.status { grid-row: 4; grid-column: 2 / -1; background: #f5f5f5; border-top: 1px solid #d8d8d8; display: flex; align-items: center; justify-content: flex-end; padding-right: 18px; font-size: 12.500px; color: #555; }
.minus { font-weight: 700; line-height: 16px; }
.track { width: 100px; height: 11px; margin: 0 6px 0 4px; background: linear-gradient(#555, #555) 0 5px / 100% 1px no-repeat; padding-left: 51px; }
.track i { display: block; width: 4px; height: 11px; background: #555; }
.pct { width: 42px; text-align: center; margin: 0 7px 0 7px; letter-spacing: -.2px; }
```
